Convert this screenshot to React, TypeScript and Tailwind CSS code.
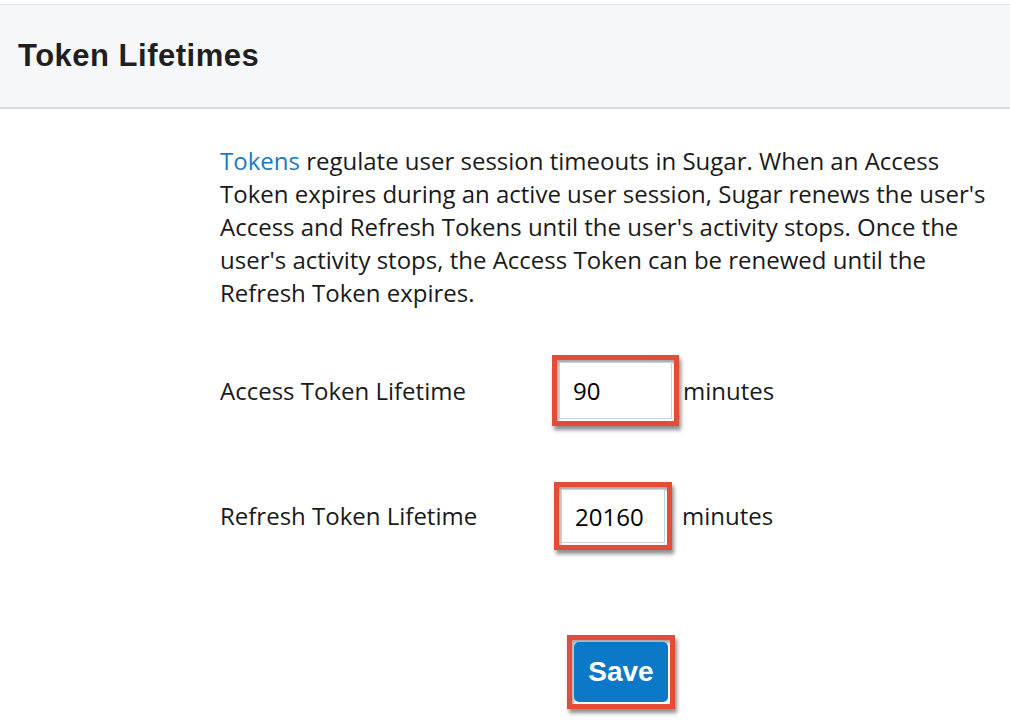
import React from 'react';

const sans = "font-['Open_Sans','Liberation_Sans',sans-serif]";
const heading = "font-['Liberation_Sans',Arial,sans-serif]";

const Highlight = ({ className, children }: { className?: string; children: React.ReactNode }) => (
  <div
    className={`border-[5px] border-[#e34c36] shadow-[2px_4px_4px_rgba(0,0,0,0.45)] ${className ?? ''}`}
  >
    <div className="h-full w-full shadow-[inset_2px_3px_3px_rgba(0,0,0,0.35)] p-[2px]">{children}</div>
  </div>
);

const LifetimeRow = ({
  label,
  value,
  labelWidth,
  boxClass,
  unitGap,
}: {
  label: string;
  value: string;
  labelWidth: string;
  boxClass: string;
  unitGap: string;
}) => (
  <div className="flex items-center">
    <div className={`${labelWidth} text-[24px] text-[#1a1a1a]`}>{label}</div>
    <Highlight className={boxClass}>
      <input
        readOnly
        value={value}
        className={`h-full w-full border border-[#c9d1d9] bg-white px-[13px] text-[24px] text-black outline-none ${sans}`}
      />
    </Highlight>
    <div className={`${unitGap} text-[24px] text-[#1a1a1a]`}>minutes</div>
  </div>
);

export default function App() {
  return (
    <div className={`min-h-screen bg-white pt-[4px] ${sans}`}>
      <div className="flex h-[105px] items-center border-t border-b-2 border-t-[#e3e7ec] border-b-[#d6dce2] bg-[#f6f7f9] px-[18px]">
        <h1 className={`${heading} text-[31px] font-bold text-[#1f1f1f] tracking-[0.5px]`}>Token Lifetimes</h1>
      </div>

      <div className="pl-[220px] pt-[35px]">
        <p className="w-[790px] text-[24px] leading-[33px] text-[#1a1a1a]">
          <span className="text-[#1b7ac6]">Tokens</span> regulate user session timeouts in Sugar. When an Access
          <br />
          Token expires during an active user session, Sugar renews the user's
          <br />
          Access and Refresh Tokens until the user's activity stops. Once the
          <br />
          user's activity stops, the Access Token can be renewed until the
          <br />
          Refresh Token expires.
        </p>

        <div className="mt-[46px]">
          <LifetimeRow
            label="Access Token Lifetime"
            value="90"
            labelWidth="w-[332px]"
            boxClass="h-[71px] w-[127px]"
            unitGap="ml-[4px]"
          />
        </div>
        <div className="mt-[56px]">
          <LifetimeRow
            label="Refresh Token Lifetime"
            value="20160"
            labelWidth="w-[334px]"
            boxClass="h-[68px] w-[118px]"
            unitGap="ml-[10px]"
          />
        </div>

        <div className="mt-[85px] pl-[347px]">
          <Highlight className="h-[74px] w-[108px]">
            <button
              className={`h-full w-full rounded-[5px] bg-[#0b78c8] text-[28px] font-bold text-white ${heading}`}
            >
              Save
            </button>
          </Highlight>
        </div>
      </div>
    </div>
  );
}
